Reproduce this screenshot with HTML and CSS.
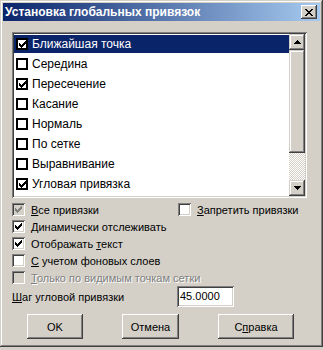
FILE: index.html
```html
<!DOCTYPE html>
<html lang="ru">
<head>
    <meta charset="UTF-8">
    <title>Установка глобальных привязок</title>
    <link rel="stylesheet" href="styles.css">
</head>
<body>
    <svg class="defs" width="0" height="0">
        <symbol id="chk" viewBox="0 0 7 7"><path d="M6 0h1v1h-1zM5 1h2v1h-2zM0 2h1v1h-1zM4 2h3v1h-3zM0 3h2v1h-2zM3 3h3v1h-3zM0 4h5v1h-5zM1 5h3v1h-3zM2 6h1v1h-1z"/></symbol>
        <symbol id="up" viewBox="0 0 7 4"><path d="M3 0h1v1h-1zM2 1h3v1h-3zM1 2h5v1h-5zM0 3h7v1h-7z"/></symbol>
        <symbol id="down" viewBox="0 0 7 4"><path d="M0 0h7v1h-7zM1 1h5v1h-5zM2 2h3v1h-3zM3 3h1v1h-1z"/></symbol>
    </svg>

    <div class="window">
        <div class="titlebar">
            <span class="title">Установка глобальных привязок</span>
            <span class="close">
                <svg width="8" height="7" viewBox="0 0 8 7"><path d="M0 0h2v1h-2zM6 0h2v1h-2zM1 1h2v1h-2zM5 1h2v1h-2zM2 2h4v1h-4zM3 3h2v1h-2zM2 4h4v1h-4zM1 5h2v1h-2zM5 5h2v1h-2zM0 6h2v1h-2zM6 6h2v1h-2z"/></svg>
            </span>
        </div>

        <div class="content">
            <div class="listbox">
                <div class="items">
                    <div class="item selected"><span class="box"><svg><use href="#chk"/></svg></span>Ближайшая точка</div>
                    <div class="item"><span class="box"></span>Середина</div>
                    <div class="item"><span class="box"><svg><use href="#chk"/></svg></span>Пересечение</div>
                    <div class="item"><span class="box"></span>Касание</div>
                    <div class="item"><span class="box"></span>Нормаль</div>
                    <div class="item"><span class="box"></span>По сетке</div>
                    <div class="item"><span class="box"></span>Выравнивание</div>
                    <div class="item"><span class="box"><svg><use href="#chk"/></svg></span>Угловая привязка</div>
                </div>
                <div class="scrollbar">
                    <div class="sb-btn"><svg width="7" height="4"><use href="#up"/></svg></div>
                    <div class="sb-thumb"></div>
                    <div class="sb-track"></div>
                    <div class="sb-btn"><svg width="7" height="4"><use href="#down"/></svg></div>
                </div>
            </div>

            <div class="options">
                <div class="opt-row">
                    <label class="check locked"><span class="cb"><svg><use href="#chk"/></svg></span><span><u>В</u>се привязки</span></label>
                    <label class="check right"><span class="cb"></span><span><u>З</u>апретить привязки</span></label>
                </div>
                <label class="check"><span class="cb"><svg><use href="#chk"/></svg></span><span><u>Д</u>инамически отслеживать</span></label>
                <label class="check"><span class="cb"><svg><use href="#chk"/></svg></span><span>Отображать <u>т</u>екст</span></label>
                <label class="check"><span class="cb"></span><span><u>С</u> учетом фоновых слоев</span></label>
                <label class="check locked disabled"><span class="cb"></span><span><u>Т</u>олько по видимым точкам сетки</span></label>
            </div>

            <div class="step-row">
                <span><u>Ш</u>аг угловой привязки</span>
                <div class="input">45.0000</div>
            </div>

            <div class="buttons">
                <div class="button ok">OK</div>
                <div class="button cancel">Отмена</div>
                <div class="button help">С<u>п</u>равка</div>
            </div>
        </div>
    </div>
</body>
</html>
```

FILE: styles.css
```css
body { margin: 0; background: #d4d0c8; font-family: "Liberation Sans", Arial, sans-serif; font-size: 11px; color: #000; }
.defs { position: absolute; }
u { text-decoration: underline; text-underline-offset: 1px; }

.window { width: 323px; height: 347px; box-sizing: border-box; padding: 3px; background: #d4d0c8;
    box-shadow: inset -1px -1px #404040, inset 1px 1px #d4d0c8, inset -2px -2px #808080, inset 2px 2px #fff; }

.titlebar { height: 18px; display: flex; align-items: center; justify-content: space-between; padding: 0 3px 0 2px;
    background: linear-gradient(to right, #0a246a, #a6caf0); }
.title { color: #fff; font-weight: bold; font-size: 12px; }
.close { width: 16px; height: 14px; box-sizing: border-box; display: flex; align-items: center; justify-content: center; background: #d4d0c8;
    box-shadow: inset -1px -1px #404040, inset 1px 1px #fff, inset -2px -2px #808080, inset 2px 2px #d4d0c8; }

.content { padding: 11px 0 0 9px; }

.listbox { width: 295px; height: 166px; box-sizing: border-box; padding: 2px; display: flex; background: #fff;
    box-shadow: inset 1px 1px #808080, inset -1px -1px #fff, inset 2px 2px #404040, inset -2px -2px #d4d0c8; }
.items { flex: 1; padding-top: 1px; font-size: 12px; }
.item { height: 18px; margin-bottom: 2px; display: flex; align-items: center; gap: 4px; padding-left: 2px; }
.item.selected { background: #0a246a; color: #fff; }
.box { width: 12px; height: 12px; box-sizing: border-box; border: 2px solid #000; background: #fff; display: flex; align-items: center; justify-content: center; }
.box svg { width: 7px; height: 7px; fill: #000; }

.scrollbar { width: 16px; display: flex; flex-direction: column; }
.sb-btn, .sb-thumb { background: #d4d0c8;
    box-shadow: inset -1px -1px #404040, inset 1px 1px #d4d0c8, inset -2px -2px #808080, inset 2px 2px #fff; }
.sb-btn { height: 16px; display: flex; align-items: center; justify-content: center; }
.sb-btn svg { fill: #000; }
.sb-thumb { height: 103px; }
.sb-track { flex: 1; background: repeating-conic-gradient(#d4d0c8 0 25%, #fff 0 50%) 0 0 / 2px 2px; }

.options { padding-top: 3px; display: flex; flex-direction: column; }
.opt-row { display: flex; }
.check { height: 17px; display: flex; align-items: center; gap: 6px; }
.check.right { margin-left: 57px; }
.opt-row .check:first-child { width: 109px; }
.cb { width: 13px; height: 13px; box-sizing: border-box; background: #fff; display: flex; align-items: center; justify-content: center;
    box-shadow: inset 1px 1px #808080, inset -1px -1px #fff, inset 2px 2px #404040, inset -2px -2px #d4d0c8; }
.cb svg { width: 7px; height: 7px; fill: #000; }
.check.locked .cb { background: #d4d0c8; }
.check.locked .cb svg { fill: #808080; }
.check.disabled { color: #808080; text-shadow: 1px 1px #fff; }

.step-row { display: flex; align-items: center; height: 21px; }
.step-row span { width: 165px; }
.input { width: 57px; height: 21px; box-sizing: border-box; padding: 4px 0 0 3px; background: #fff;
    box-shadow: inset 1px 1px #808080, inset -1px -1px #fff, inset 2px 2px #404040, inset -2px -2px #d4d0c8; }

.buttons { display: flex; gap: 39px; margin: 7px 0 0 15px; }
.button { height: 25px; box-sizing: border-box; display: flex; align-items: center; justify-content: center; background: #d4d0c8;
    box-shadow: inset -1px -1px #404040, inset 1px 1px #fff, inset -2px -2px #808080, inset 2px 2px #d4d0c8; }
.ok { width: 56px; }
.cancel { width: 57px; }
.help { width: 76px; }
```
